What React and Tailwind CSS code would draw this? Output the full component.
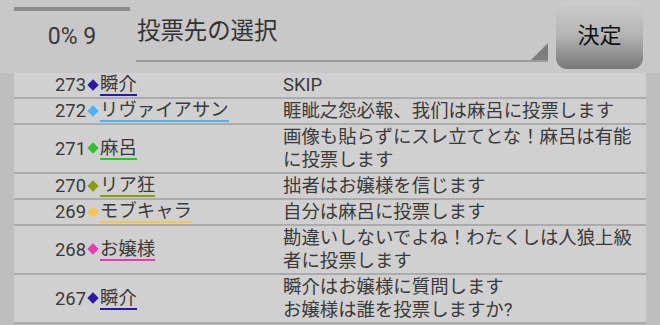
const rows = [
  { no: 273, name: "瞬介", color: "bg-[#2a18a8]", line: "border-[#2a18a8]", msg: ["SKIP"] },
  { no: 272, name: "リヴァイアサン", color: "bg-[#4cb2f6]", line: "border-[#4cb2f6]", msg: ["睚眦之怨必報、我们は麻呂に投票します"] },
  { no: 271, name: "麻呂", color: "bg-[#2dc22d]", line: "border-[#2dc22d]", msg: ["画像も貼らずにスレ立てとな！麻呂は有能", "に投票します"] },
  { no: 270, name: "リア狂", color: "bg-[#8a9c0e]", line: "border-[#8a9c0e]", msg: ["拙者はお嬢様を信じます"] },
  { no: 269, name: "モブキャラ", color: "bg-[#f8c64c]", line: "border-[#f8c64c]", msg: ["自分は麻呂に投票します"] },
  { no: 268, name: "お嬢様", color: "bg-[#e83bb2]", line: "border-[#e83bb2]", msg: ["勘違いしないでよね！わたくしは人狼上級", "者に投票します"] },
  { no: 267, name: "瞬介", color: "bg-[#2a18a8]", line: "border-[#2a18a8]", msg: ["瞬介はお嬢様に質問します", "お嬢様は誰を投票しますか?"] },
];

const Row = ({ no, name, color, line, msg }) => (
  <div className="flex border-b-2 border-[#ababab] pb-px">
    <div className="flex w-[269px] shrink-0 items-center pl-[41px]">
      <span className="leading-[23px]">{no}</span>
      <span className="flex w-[14px] justify-center">
        <span className={`h-[8px] w-[8px] rotate-45 ${color}`} />
      </span>
      <span className={`border-b-2 leading-[21px] ${line}`}>{name}</span>
    </div>
    <div className="flex-1 leading-[23px]">
      {msg.map((m) => (
        <div key={m}>{m}</div>
      ))}
    </div>
  </div>
);

export default function App() {
  return (
    <div
      className="h-[325px] w-[660px] overflow-hidden bg-[#bebebe] text-[#3a3a3a]"
      style={{ fontFamily: "Roboto, 'Noto Sans CJK JP', sans-serif" }}
    >
      <header className="flex h-[73px] bg-[#c8c8c8] pl-[14px] pr-[17px] pt-px">
        <div className="flex w-[116px] flex-col pt-[6px]">
          <div className="h-[4px] bg-[#8a8a8a]" />
          <div className="mt-[14px] text-center text-[23px] leading-[24px]">0% 9</div>
        </div>
        <div className="relative ml-[6px] mr-[8px] h-[61px] flex-1 border-b-2 border-[#9a9a9a]">
          <div className="pl-px pt-[17px] text-[23.4px] leading-[26px] text-[#333]">投票先の選択</div>
          <svg className="absolute bottom-0 right-0" width="17" height="17" viewBox="0 0 17 17">
            <polygon points="17,0 17,17 0,17" fill="#7d7d7d" />
          </svg>
        </div>
        <button className="flex h-[68px] w-[87px] items-center justify-center rounded-[11px] bg-gradient-to-b from-[#cdcdcd] via-[#b4b4b4] to-[#787878] text-[22px] text-[#111]">
          決定
        </button>
      </header>
      <div className="mx-[14px] bg-[#d0d0d0] text-[18.4px]">
        {rows.map((r) => (
          <Row key={r.no} {...r} />
        ))}
      </div>
    </div>
  );
}
